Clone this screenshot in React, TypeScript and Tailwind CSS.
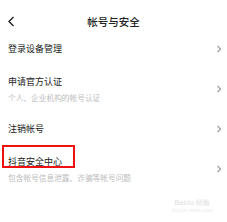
import { ReactNode } from 'react';

const Chevron = () => (
  <svg width="6" height="8" viewBox="0 0 6 8" className="shrink-0">
    <path d="M1.5 1 L4.5 4 L1.5 7" fill="none" stroke="#9a9a9a" strokeWidth="1.1" />
  </svg>
);

const Row = ({ title, sub, children }: { title: string; sub?: string; children?: ReactNode }) => (
  <div className="relative flex h-[40px] items-center justify-between pl-[8px] pr-[5px]">
    <div className="flex flex-col">
      <span className="text-[9px] leading-[12px] text-[#222]">{title}</span>
      {sub && <span className="mt-[4px] text-[7.7px] leading-[11px] text-[#bdbdbd]">{sub}</span>}
    </div>
    <Chevron />
    {children}
  </div>
);

export default function App() {
  return (
    <div
      className="relative h-[222px] w-[227px] overflow-hidden bg-white"
      style={{ fontFamily: '"Noto Sans CJK SC", "Noto Sans", sans-serif' }}
    >
      {/* Header */}
      <div className="relative flex h-[29px] items-start justify-center pt-[16px]">
        <svg width="8" height="11" viewBox="0 0 8 11" className="absolute left-[7px] top-[16px]">
          <path d="M6.5 1 L2 5.5 L6.5 10" fill="none" stroke="#222" strokeWidth="1.4" />
        </svg>
        <span className="text-[10.5px] font-medium leading-[12px] text-[#222]">帐号与安全</span>
      </div>

      <Row title="登录设备管理" />
      <Row title="申请官方认证" sub="个人、企业机构的帐号认证" />
      <Row title="注销帐号" />
      <Row title="抖音安全中心" sub="包含帐号信息泄露、诈骗等帐号问题">
        <div className="pointer-events-none absolute left-[2px] top-[-4px] h-[23px] w-[73px] border-2 border-[#f01010]" />
      </Row>

      {/* watermark */}
      <div className="absolute left-[172px] top-[199px] flex flex-col items-center opacity-20">
        <span className="text-[7px] leading-[8px] font-bold text-[#888]" style={{ fontFamily: '"Liberation Sans", sans-serif' }}>
          Bai<span className="text-[#aaa]">d</span>u 经验
        </span>
        <span className="text-[5px] leading-[7px] text-[#999]" style={{ fontFamily: '"Liberation Sans", sans-serif' }}>
          jingyan.baidu.com
        </span>
      </div>
    </div>
  );
}
